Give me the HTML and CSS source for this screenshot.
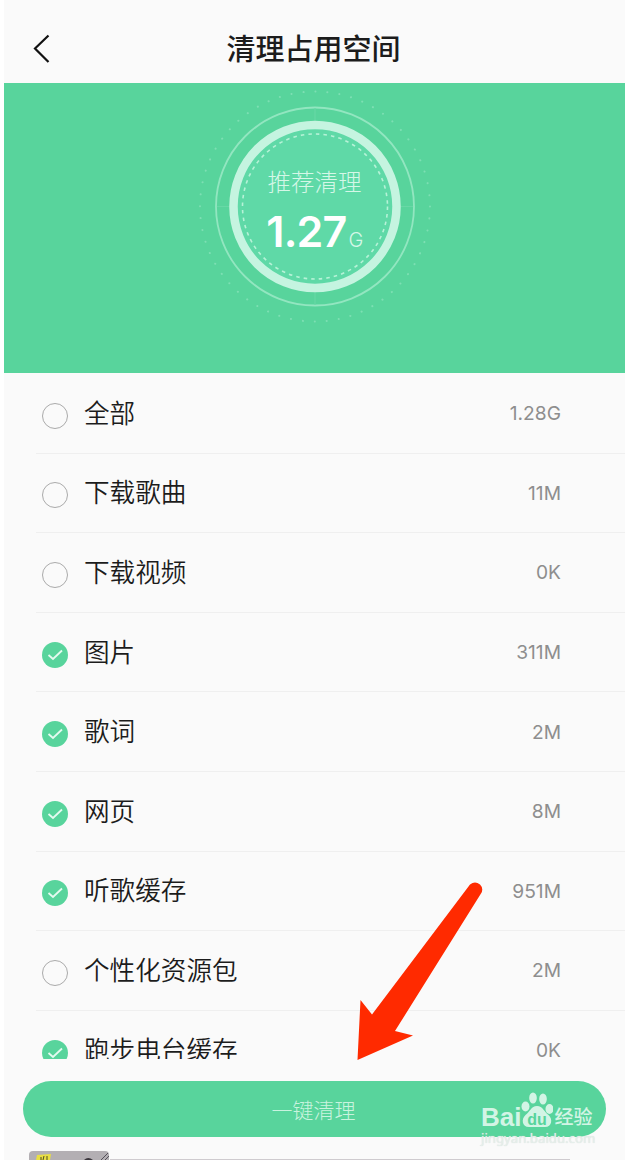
FILE: index.html
```html
<!DOCTYPE html>
<html lang="zh-CN">
<head>
    <meta charset="UTF-8">
    <title>清理占用空间</title>
    <link rel="stylesheet" href="styles.css">
</head>
<body>
<div class="page">
    <div class="hd">
        <svg class="back" viewBox="0 0 18 30"><path d="M16.500 1.500L3 14.500L16.500 28"/></svg>
        <h1>清理占用空间</h1>
    </div>
    <div class="banner">
        <svg class="rings" viewBox="0 0 240 240">
            <circle class="dots" cx="120" cy="120.500" r="115"/>
            <circle class="thin" cx="120" cy="120.500" r="99"/>
            <path class="tick" d="M22 120.500H34M206 120.500H218M120 22V35M120 206V219"/>
            <circle class="thick" cx="120" cy="120.500" r="81.500"/>
            <circle class="dash" cx="120" cy="120.500" r="72.500"/>
        </svg>
        <div class="total">
            <p class="tip">推荐清理</p>
            <p class="num">1.27<span>G</span></p>
        </div>
    </div>
    <ul class="list">
        <li><i class="radio"></i><p>全部</p><span>1.28G</span></li>
        <li><i class="radio"></i><p>下载歌曲</p><span>11M</span></li>
        <li><i class="radio"></i><p>下载视频</p><span>0K</span></li>
        <li><i class="radio on"><svg viewBox="0 0 26 26"><path d="M6.500 13L11 17L20 8.500"/></svg></i><p>图片</p><span>311M</span></li>
        <li><i class="radio on"><svg viewBox="0 0 26 26"><path d="M6.500 13L11 17L20 8.500"/></svg></i><p>歌词</p><span>2M</span></li>
        <li><i class="radio on"><svg viewBox="0 0 26 26"><path d="M6.500 13L11 17L20 8.500"/></svg></i><p>网页</p><span>8M</span></li>
        <li><i class="radio on"><svg viewBox="0 0 26 26"><path d="M6.500 13L11 17L20 8.500"/></svg></i><p>听歌缓存</p><span>951M</span></li>
        <li><i class="radio"></i><p>个性化资源包</p><span>2M</span></li>
        <li><i class="radio on"><svg viewBox="0 0 26 26"><path d="M6.500 13L11 17L20 8.500"/></svg></i><p>跑步电台缓存</p><span>0K</span></li>
    </ul>
    <div class="ft">
        <button class="btn">一键清理</button>
    </div>
    <div class="next">
        <svg class="thumb" viewBox="0 0 81 9">
            <path fill="#b3afb3" d="M0 9V4Q0 0 4 0H76Q80 0 80 4V9Z"/>
            <path fill="#e9df43" d="M8 4L22 3L21 9H7Z"/>
            <path stroke="#4d4a28" d="M12 6V9M15 5L14 9M18 5V9"/>
            <path fill="#3b373d" d="M55 9Q59 5 64 9Z"/>
            <path stroke="#55515a" d="M72 9L79 2M76 9L80 5"/>
        </svg>
        <div class="edge"></div>
    </div>
</div>

<!-- 箭头 -->
<svg class="arrow" viewBox="0 0 130 180"><path d="M113 4.500Q118 0.500 123 4.500Q127 8.500 124 13.500L38 151L56 155.500L0.500 180L3.500 120L15 134.500Z"/></svg>

<!-- 水印 -->
<div class="mark">
    <div class="logo">
        <b>Bai</b>
        <svg class="paw" viewBox="0 0 32 38">
            <ellipse cx="4.500" cy="15.500" rx="4" ry="5"/>
            <ellipse cx="12" cy="7" rx="3.800" ry="5.500"/>
            <ellipse cx="22" cy="8" rx="3.800" ry="5.500"/>
            <ellipse cx="28.500" cy="18" rx="4" ry="5"/>
            <path d="M16 15C10 15 9 21 4.500 24C0 28 1 36 8 36H24C31 36 32 28 27.500 24C23 21 22 15 16 15Z"/>
            <text x="16" y="33.500" text-anchor="middle">du</text>
        </svg>
        <strong>经验</strong>
    </div>
    <p>jingyan.baidu.com</p>
</div>
</body>
</html>
```
FILE: styles.css
```css
/*reset*/
*{box-sizing:border-box;}
body,h1,p,ul{margin:0;padding:0;}
body{
    height:1160px;
    overflow:hidden;
    background-color:#fff;
    font-family:Inter,"Noto Sans CJK SC",sans-serif;
}
.page{
    display:flex;
    flex-direction:column;
    width:621px;
    height:1160px;
    margin-left:4px;
    background-color:#fafafa;
}

/*头部*/
.hd{
    display:flex;
    align-items:center;
    height:83px;
    padding:14px 28px 0;
}
.back{width:18px;height:30px;}
.back path{fill:none;stroke:#111;stroke-width:2.2;}
.hd h1{
    flex:1;
    padding:2px 20px 0 0;
    color:#1c1c1c;
    font-size:29px;
    font-weight:500;
    line-height:40px;
    text-align:center;
}

/*圆环*/
.banner{
    display:grid;
    justify-content:center;
    height:290px;
    padding-top:3px;
    background-color:#58d49c;
}
.rings,.total{grid-area:1/1;}
.rings{width:240px;height:240px;fill:none;}
.dots{stroke:#7ddfb3;stroke-width:2;stroke-linecap:round;stroke-dasharray:.1 11.94;}
.thin{stroke:#92e6c0;stroke-width:1.8;}
.thick{fill:#5fd9a7;stroke:#c5f4e0;stroke-width:8.5;}
.dash{stroke:#b6f2d7;stroke-width:1.6;stroke-dasharray:3.5 4.1;}
.tick{stroke:#68d8a6;}
.total{padding-top:79px;color:#fff;text-align:center;}
.tip{color:#d5f7e7;font-size:23.5px;font-weight:300;line-height:36px;}
.num{font-size:43px;font-weight:600;letter-spacing:-.8px;line-height:60px;}
.num span{margin-left:2px;color:#d5f7e7;font-size:20px;font-weight:300;}

/*列表*/
.list{height:686px;padding-top:1px;overflow:hidden;list-style:none;}
.list li{
    display:flex;
    align-items:center;
    height:79.6px;
    margin-left:32px;
    padding:0 64px 0 6px;
    border-bottom:1px solid #efefef;
}
.radio{
    width:26px;
    height:26px;
    margin-top:5px;
    border:1.5px solid #aaa;
    border-radius:50%;
}
.radio.on{border:0;background-color:#58d49c;}
.radio svg{display:block;}
.radio path{fill:none;stroke:#e5faf0;stroke-width:1.8;}
.list p{
    flex:1;
    margin-left:16px;
    padding-top:1px;
    color:#1c1c1c;
    font-size:25.6px;
    font-weight:350;
    line-height:36px;
}
.list span{color:#8e8e8e;font-size:19.2px;}

/*底部按钮*/
.ft{padding:22px 19px 14px;}
.btn{
    display:block;
    width:583px;
    height:56px;
    padding:0 2px 1px 0;
    border:0;
    border-radius:28px;
    background-color:#58d49c;
    color:#c9f3df;
    font-family:inherit;
    font-size:21px;
    font-weight:300;
}
.next{
    display:flex;
    align-items:flex-end;
    height:9px;
    padding-left:25px;
    overflow:hidden;
}
.thumb{flex:none;width:81px;height:9px;fill:none;}
.edge{width:460px;height:1px;background-color:#cfcbcf;}

.arrow{position:absolute;left:357px;top:880px;width:130px;height:180px;fill:#ff2a00;}

/*水印*/
.mark{position:absolute;left:481px;top:1091px;width:116px;color:#d3f4e5;}
.logo{display:flex;align-items:flex-end;height:38px;}
.logo b{font:bold 26px/23px "Liberation Sans",sans-serif;}
.paw{flex:none;width:32px;height:38px;fill:#d3f4e5;}
.paw text{fill:#58d49c;font:bold 16px "Liberation Sans",sans-serif;}
.logo strong{margin-left:1px;font-size:19px;font-weight:500;line-height:23px;}
.mark p{
    color:#e6efeb;
    font:13.2px/18px "Noto Sans",sans-serif;
    text-shadow:0 0 1px #d5dbd8;
}
```
